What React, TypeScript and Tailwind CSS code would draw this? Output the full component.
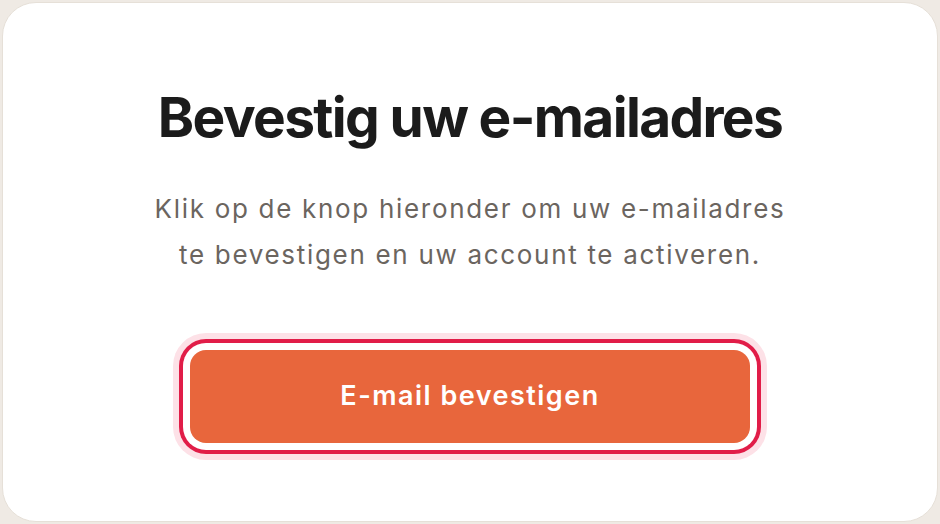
export default function App() {
  return (
    <div className="h-screen w-full bg-[#efeae4] p-[2px]">
      <div className="flex h-full flex-col items-center rounded-[34px] border border-[#e6e0d8] bg-white pt-[74px]">
        <h1 className="font-['Inter',sans-serif] text-[55px] font-bold leading-[80px] tracking-[-0.03em] text-[#1b1b1b]">
          Bevestig uw e-mailadres
        </h1>
        <p className="mt-[29px] text-center font-['Inter',sans-serif] text-[26px] leading-[46px] tracking-[0.065em] text-[#6b655f]">
          Klik op de knop hieronder om uw e-mailadres
          <br />
          te bevestigen en uw account te activeren.
        </p>
        <button className="mt-[72px] h-[93px] w-[560px] rounded-[16px] bg-[#e8663c] font-['Inter',sans-serif] text-[27px] font-semibold tracking-[0.055em] text-white shadow-[0_0_0_7px_#ffffff,0_0_0_11px_#e11d48,0_0_0_17px_#fde1e7]">
          E-mail bevestigen
        </button>
      </div>
    </div>
  );
}
